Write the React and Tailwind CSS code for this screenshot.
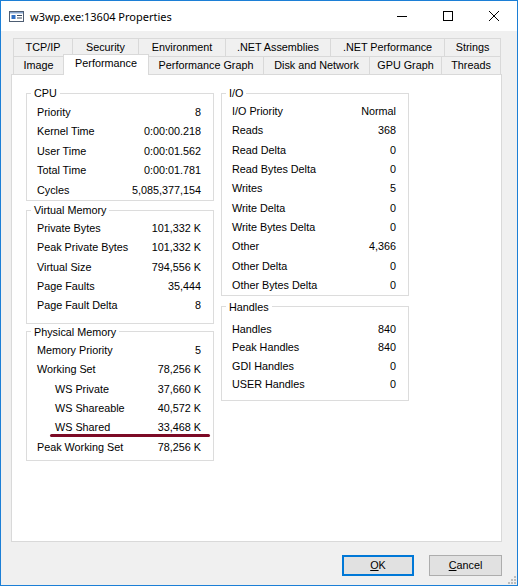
import React from "react";

// Tabs of the properties window (two rows, widths as in the dialog)
const topTabs = [
  { name: "TCP/IP", w: "w-[59px]" },
  { name: "Security", w: "w-[66px]" },
  { name: "Environment", w: "w-[87px]" },
  { name: ".NET Assemblies", w: "w-[105px]" },
  { name: ".NET Performance", w: "w-[114px]" },
  { name: "Strings", w: "w-[57px]", last: true },
];

const bottomTabs = [
  { name: "Image", w: "w-[50px]" },
  { name: "Performance", w: "w-[86px]", active: true },
  { name: "Performance Graph", w: "w-[114px]" },
  { name: "Disk and Network", w: "w-[106px]" },
  { name: "GPU Graph", w: "w-[72px]" },
  { name: "Threads", w: "w-[60px]", last: true },
];

const cpu = [
  { label: "Priority", value: "8" },
  { label: "Kernel Time", value: "0:00:00.218" },
  { label: "User Time", value: "0:00:01.562" },
  { label: "Total Time", value: "0:00:01.781" },
  { label: "Cycles", value: "5,085,377,154" },
];

const virtualMemory = [
  { label: "Private Bytes", value: "101,332 K" },
  { label: "Peak Private Bytes", value: "101,332 K" },
  { label: "Virtual Size", value: "794,556 K" },
  { label: "Page Faults", value: "35,444" },
  { label: "Page Fault Delta", value: "8" },
];

const physicalMemory = [
  { label: "Memory Priority", value: "5" },
  { label: "Working Set", value: "78,256 K" },
  { label: "WS Private", value: "37,660 K", indent: true },
  { label: "WS Shareable", value: "40,572 K", indent: true },
  { label: "WS Shared", value: "33,468 K", indent: true, mark: true },
  { label: "Peak Working Set", value: "78,256 K" },
];

const io = [
  { label: "I/O Priority", value: "Normal" },
  { label: "Reads", value: "368" },
  { label: "Read Delta", value: "0" },
  { label: "Read Bytes Delta", value: "0" },
  { label: "Writes", value: "5" },
  { label: "Write Delta", value: "0" },
  { label: "Write Bytes Delta", value: "0" },
  { label: "Other", value: "4,366" },
  { label: "Other Delta", value: "0" },
  { label: "Other Bytes Delta", value: "0" },
];

const handles = [
  { label: "Handles", value: "840" },
  { label: "Peak Handles", value: "840" },
  { label: "GDI Handles", value: "0" },
  { label: "USER Handles", value: "0" },
];

// Group box (fieldset + legend, like a Win32 group)
const Group = ({ title, rows, className = "", bodyClass = "", rowClass }) => (
  <fieldset className={`border border-[#dcdcdc] ${className}`}>
    <legend className="ml-[4px] px-[3px] leading-[14px]">{title}</legend>
    <div className={bodyClass}>
      {rows.map((r) => (
        <div
          key={r.label}
          className={`relative flex items-center justify-between pl-[10px] pr-[12px] ${rowClass}`}
        >
          <span className={r.indent ? "pl-[18px]" : ""}>{r.label}</span>
          <span>{r.value}</span>
          {r.mark && (
            <div className="absolute left-[23px] top-[16.5px] h-[3px] w-[160px] rounded-full bg-[#7c0a26]" />
          )}
        </div>
      ))}
    </div>
  </fieldset>
);

const WindowIcon = () => (
  <svg width="15" height="11" viewBox="0 0 15 11">
    <rect x="0.5" y="0.5" width="14" height="10" fill="#fff" stroke="#4d5d73" />
    <rect x="1" y="1" width="13" height="1.5" fill="#8aa7cf" />
    <rect x="2.5" y="4" width="4" height="4" fill="#2f6fc4" />
    <rect x="8" y="4" width="5" height="1" fill="#3b4a5e" />
    <rect x="8" y="6.5" width="5" height="1" fill="#3b4a5e" />
  </svg>
);

const App = () => {
  return (
    <div className="relative flex h-[586px] w-[518px] flex-col border border-[#1c7fd6] bg-[#f0f0f0] font-['Liberation_Sans',Arial,sans-serif] text-[10.8px] text-black">
      {/* Title bar */}
      <div className="flex h-[30px] items-center bg-white">
        <div className="flex items-center pl-[8px]">
          <WindowIcon />
          <span className="ml-[6px] font-['Noto_Sans',sans-serif] text-[11px] leading-none">
            w3wp.exe:13604 Properties
          </span>
        </div>
        <div className="ml-auto flex h-full">
          <div className="flex h-full w-[46px] items-center justify-center">
            <svg width="10" height="10" viewBox="0 0 10 10">
              <line x1="0" y1="5.5" x2="10" y2="5.5" stroke="#000" strokeWidth="1" />
            </svg>
          </div>
          <div className="flex h-full w-[46px] items-center justify-center">
            <svg width="10" height="10" viewBox="0 0 10 10">
              <rect x="0.5" y="0.5" width="9" height="9" fill="none" stroke="#000" strokeWidth="1" />
            </svg>
          </div>
          <div className="flex h-full w-[46px] items-center justify-center">
            <svg width="10" height="10" viewBox="0 0 10 10">
              <line x1="0" y1="0" x2="10" y2="10" stroke="#000" strokeWidth="1" />
              <line x1="10" y1="0" x2="0" y2="10" stroke="#000" strokeWidth="1" />
            </svg>
          </div>
        </div>
      </div>

      {/* Tabs */}
      <div className="mt-[7px] ml-[12px]">
        <div className="flex h-[18px]">
          {topTabs.map((t) => (
            <div
              key={t.name}
              className={`flex h-[18px] items-center justify-center border-t border-l border-[#d9d9d9] ${t.w} ${t.last ? "border-r" : ""}`}
            >
              {t.name}
            </div>
          ))}
        </div>
        <div className="flex h-[18px] items-start">
          {bottomTabs.map((t, i) =>
            t.active ? (
              <div
                key={t.name}
                className={`relative z-10 -mt-[2px] h-[21px] border-t border-l border-r border-[#d9d9d9] bg-white ${t.w}`}
              >
                <div className="flex h-[17px] items-center justify-center">{t.name}</div>
              </div>
            ) : (
              <div
                key={t.name}
                className={`flex h-[18px] items-center justify-center border-t border-[#d9d9d9] ${t.w} ${
                  bottomTabs[i - 1] && bottomTabs[i - 1].active ? "" : "border-l"
                } ${t.last ? "border-r" : ""}`}
              >
                {t.name}
              </div>
            )
          )}
        </div>
      </div>

      {/* Tab page */}
      <div className="ml-[10px] flex h-[468px] w-[491px] gap-[7px] border border-[#d9d9d9] bg-white pt-[11px] pl-[14px]">
        <div className="flex w-[188px] flex-col">
          <Group title="CPU" rows={cpu} bodyClass="pt-[2px]" rowClass="h-[19.5px]" />
          <Group
            title="Virtual Memory"
            rows={virtualMemory}
            className="mt-[2.5px]"
            bodyClass="pt-[1.5px] pb-[8px]"
            rowClass="h-[19.25px]"
          />
          <Group
            title="Physical Memory"
            rows={physicalMemory}
            className="mt-[1px]"
            bodyClass="pt-[1.5px] pb-[3px]"
            rowClass="h-[19.4px]"
          />
        </div>
        <div className="flex w-[188px] flex-col">
          <Group title="I/O" rows={io} bodyClass="pt-[1.5px]" rowClass="h-[19.33px]" />
          <Group
            title="Handles"
            rows={handles}
            className="mt-[4px]"
            bodyClass="pt-[5.5px] pb-[6.5px]"
            rowClass="h-[18.67px]"
          />
        </div>
      </div>

      {/* Buttons */}
      <div className="mt-[13px] flex justify-end gap-[15px] pr-[15px]">
        <button className="flex h-[21px] w-[72px] items-center justify-center border-2 border-[#0078d7] bg-[#e1e1e1]">
          <span>
            <span className="underline">O</span>K
          </span>
        </button>
        <button className="flex h-[21px] w-[73px] items-center justify-center border border-[#adadad] bg-[#e1e1e1]">
          <span>
            <span className="underline">C</span>ancel
          </span>
        </button>
      </div>

      {/* Size grip */}
      <svg className="absolute right-[1px] bottom-[1px]" width="10" height="10" viewBox="0 0 10 10">
        {[
          [8, 2], [8, 5], [5, 5], [8, 8], [5, 8], [2, 8],
        ].map(([x, y]) => (
          <rect key={`${x}-${y}`} x={x} y={y} width="2" height="2" fill="#bcbcbc" />
        ))}
      </svg>
    </div>
  );
};

export default App;
